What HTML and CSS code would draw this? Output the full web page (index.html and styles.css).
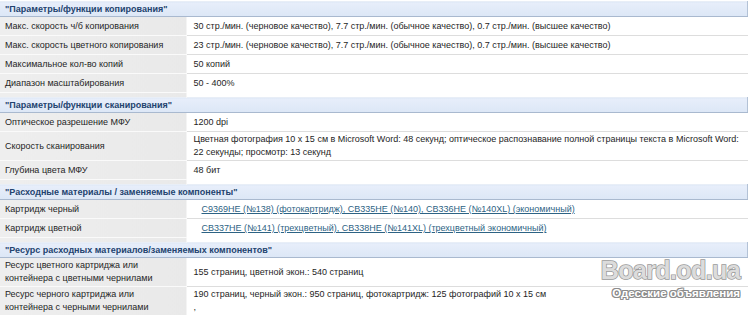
FILE: index.html
```html
<!DOCTYPE html>
<html lang="ru">
<head>
<meta charset="utf-8">
<title>Характеристики</title>
<link rel="stylesheet" href="styles.css">
</head>
<body>
<table class="spec">
  <colgroup><col class="c-label"><col class="c-value"></colgroup>
  <tr class="sec"><th colspan="2">"Параметры/функции копирования"</th></tr>
  <tr><td class="lbl">Макс. скорость ч/б копирования</td><td class="val">30 стр./мин. (черновое качество), 7.7 стр./мин. (обычное качество), 0.7 стр./мин. (высшее качество)</td></tr>
  <tr><td class="lbl">Макс. скорость цветного копирования</td><td class="val">23 стр./мин. (черновое качество), 7.7 стр./мин. (обычное качество), 0.7 стр./мин. (высшее качество)</td></tr>
  <tr><td class="lbl">Максимальное кол-во копий</td><td class="val">50 копий</td></tr>
  <tr class="last"><td class="lbl">Диапазон масштабирования</td><td class="val">50 - 400%</td></tr>
  <tr class="gap"><td class="lbl"></td><td class="val"></td></tr>

  <tr class="sec"><th colspan="2">"Параметры/функции сканирования"</th></tr>
  <tr><td class="lbl">Оптическое разрешение МФУ</td><td class="val">1200 dpi</td></tr>
  <tr class="two"><td class="lbl">Скорость сканирования</td><td class="val">Цветная фотография 10 x 15 см в Microsoft Word: 48 секунд; оптическое распознавание полной страницы текста в Microsoft Word:<br>22 секунды; просмотр: 13 секунд</td></tr>
  <tr class="last"><td class="lbl">Глубина цвета МФУ</td><td class="val">48 бит</td></tr>
  <tr class="gap"><td class="lbl"></td><td class="val"></td></tr>

  <tr class="sec"><th colspan="2">"Расходные материалы / заменяемые компоненты"</th></tr>
  <tr><td class="lbl">Картридж черный</td><td class="val links"><a href="#">C9369HE (№138) (фотокартридж), CB335HE (№140), CB336HE (№140XL) (экономичный)</a></td></tr>
  <tr class="last"><td class="lbl">Картридж цветной</td><td class="val links"><a href="#">CB337HE (№141) (трехцветный), CB338HE (№141XL) (трехцветный экономичный)</a></td></tr>
  <tr class="gap"><td class="lbl"></td><td class="val"></td></tr>

  <tr class="sec"><th colspan="2">"Ресурс расходных материалов/заменяемых компонентов"</th></tr>
  <tr class="two"><td class="lbl">Ресурс цветного картриджа или<br>контейнера с цветными чернилами</td><td class="val">155 страниц, цветной экон.: 540 страниц</td></tr>
  <tr class="two last"><td class="lbl">Ресурс черного картриджа или<br>контейнера с черными чернилами</td><td class="val">190 страниц, черный экон.: 950 страниц, фотокартридж: 125 фотографий 10 x 15 см<br><span class="tail">,</span></td></tr>
</table>

<div class="watermark">
  <div class="wm-big">Board.od.ua</div>
  <div class="wm-small">Одесские объявления</div>
</div>
</body>
</html>
```

FILE: styles.css
```css
html, body {
  margin: 0;
  padding: 0;
  background: #ffffff;
}

body {
  font-family: Arial, "Liberation Sans", sans-serif;
  font-size: 9px;
  color: #222222;
  position: relative;
  height: 315px;
  overflow: hidden;
}

.spec {
  border-collapse: collapse;
  table-layout: fixed;
  width: 748px;
  margin-top: 1px;
}

.c-label { width: 186px; }

.sec th {
  text-align: left;
  font-weight: bold;
  color: #23436f;
  background: linear-gradient(#e7eefa, #dce7f6);
  border-top: 1px solid #e8eef7;
  border-bottom: 1px solid #a9b9cf;
  border-right: 1px solid #b3c2d6;
  padding: 1px 5px 0 5px;
  height: 13px;
  line-height: 13px;
}

td {
  padding: 3px 5px 2px;
  line-height: 13px;
  vertical-align: middle;
}

.two td {
  padding-top: 1px;
  padding-bottom: 1px;
}

.lbl {
  background: linear-gradient(90deg, #eeeeee, #e9e9e9);
  border-bottom: 1px solid #fafafa;
  border-right: 1px solid #f4f4f4;
  color: #252525;
}

.val {
  border-bottom: 1px solid #dddddd;
  padding-left: 7px;
  color: #1e1e1e;
}

.last .val { border-bottom: 0; }

.gap td {
  height: 4px;
  padding: 0;
  border-bottom: 0;
}

.links { padding-left: 15px; }

.links a {
  color: #2d6384;
  text-decoration: underline;
}

.tail {
  display: inline-block;
  line-height: 10px;
}

.watermark {
  position: absolute;
  left: 596px;
  top: 256px;
  width: 144px;
  text-align: right;
}

.wm-big {
  font-family: Arial, "Liberation Sans", sans-serif;
  font-weight: bold;
  font-size: 25px;
  line-height: 28px;
  letter-spacing: -0.6px;
  color: #dcdcdc;
  -webkit-text-stroke: 1.5px #9a9a9a;
  paint-order: stroke fill;
}

.wm-small {
  font-family: Arial, "Liberation Sans", sans-serif;
  font-weight: bold;
  font-size: 11.5px;
  line-height: 14px;
  margin-top: 2px;
  color: #ffffff;
  text-shadow: 1px 0 0 #8c8c8c, -1px 0 0 #8c8c8c, 0 1px 0 #8c8c8c, 0 -1px 0 #8c8c8c, 1px 1px 0 #8c8c8c, -1px -1px 0 #8c8c8c, 1px -1px 0 #8c8c8c, -1px 1px 0 #8c8c8c;
}
```
